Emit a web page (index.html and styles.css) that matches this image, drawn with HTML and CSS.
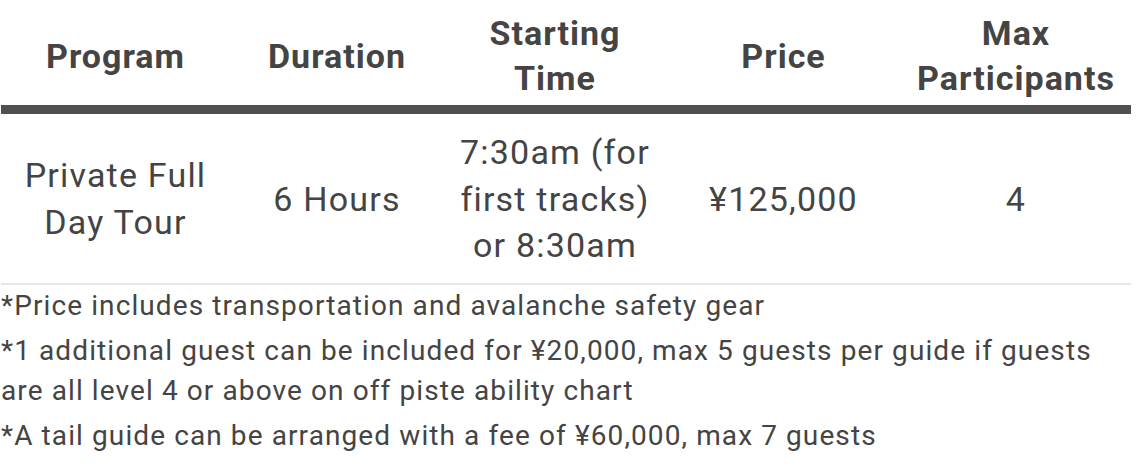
FILE: index.html
```html
<!DOCTYPE html>
<html lang="en">
<head>
<meta charset="utf-8">
<title>Private Full Day Tour</title>
<link rel="stylesheet" href="styles.css">
</head>
<body>
<div class="wrap">
  <table class="tour">
    <colgroup>
      <col class="c1"><col class="c2"><col class="c3"><col class="c4"><col class="c5">
    </colgroup>
    <thead>
      <tr>
        <th>Program</th>
        <th>Duration</th>
        <th>Starting<br>Time</th>
        <th>Price</th>
        <th>Max<br>Participants</th>
      </tr>
    </thead>
    <tbody>
      <tr>
        <td>Private Full<br>Day Tour</td>
        <td>6 Hours</td>
        <td>7:30am (for<br>first tracks)<br>or 8:30am</td>
        <td>¥125,000</td>
        <td>4</td>
      </tr>
    </tbody>
  </table>
  <div class="notes">
    <p>*Price includes transportation and avalanche safety gear</p>
    <p>*1 additional guest can be included for ¥20,000, max 5 guests per guide if guests<br>are all level 4 or above on off piste ability chart</p>
    <p>*A tail guide can be arranged with a fee of ¥60,000, max 7 guests</p>
  </div>
</div>
</body>
</html>
```
FILE: styles.css
```css
html, body {
  margin: 0;
  padding: 0;
  background: #ffffff;
}
body {
  font-family: Roboto, "Liberation Sans", sans-serif;
  color: #444444;
}
.wrap {
  width: 1130px;
  margin-left: 1px;
}
.tour {
  width: 1130px;
  border-collapse: collapse;
  table-layout: fixed;
}
.c1 { width: 229px; }
.c2 { width: 214px; }
.c3 { width: 222px; }
.c4 { width: 235px; }
.c5 { width: 230px; }
.tour th {
  font-weight: 700;
  font-size: 34px;
  letter-spacing: 1px;
  line-height: 45px;
  text-align: center;
  vertical-align: middle;
  padding: 11px 0 4px;
  color: #444444;
  border-bottom: 9px solid #505050;
}
.tour td {
  font-size: 34px;
  letter-spacing: 1.2px;
  line-height: 46.5px;
  text-align: center;
  vertical-align: middle;
  padding: 15px 0 14px;
  border-bottom: 2px solid #e6e6e6;
}
.notes p {
  margin: 0 0 5px;
  font-size: 28px;
  letter-spacing: 1.1px;
  line-height: 40px;
}
.notes p:first-child {
  margin-top: 1px;
}
```
